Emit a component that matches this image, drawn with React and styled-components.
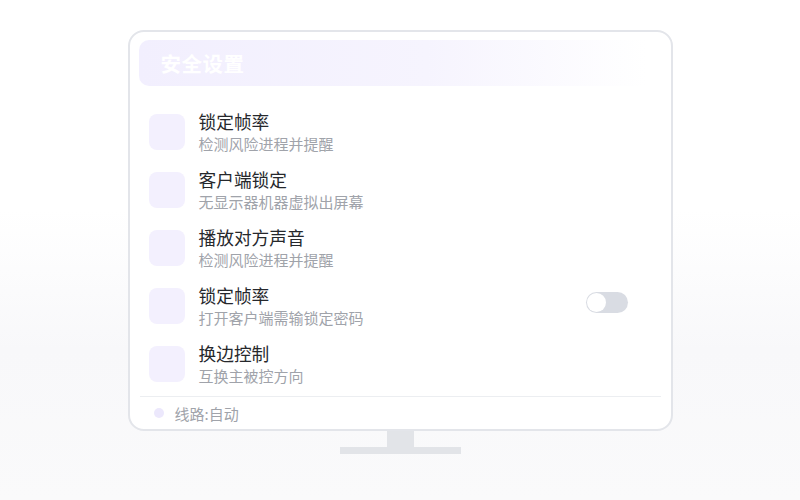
import React from "react";
import styled, { createGlobalStyle } from "styled-components";

const rows = [
  { title: "锁定帧率", desc: "检测风险进程并提醒" },
  { title: "客户端锁定", desc: "无显示器机器虚拟出屏幕" },
  { title: "播放对方声音", desc: "检测风险进程并提醒" },
  { title: "锁定帧率", desc: "打开客户端需输锁定密码", toggle: true },
  { title: "换边控制", desc: "互换主被控方向" },
];

const GlobalStyle = createGlobalStyle`
  html, body {
    margin: 0;
    padding: 0;
  }
  body {
    width: 800px;
    height: 500px;
    overflow: hidden;
    font-family: "Noto Sans CJK SC", "Noto Sans", sans-serif;
    background: linear-gradient(180deg, #ffffff 0%, #ffffff 42%, #f8f8fa 70%, #fafafb 100%);
  }
`;

const Page = styled.div`
  display: flex;
  flex-direction: column;
  align-items: center;
  padding-top: 30px;
`;

const Screen = styled.div`
  box-sizing: border-box;
  width: 545px;
  height: 401px;
  border: 2px solid #e3e5ea;
  border-radius: 16px;
  background: #ffffff;
  padding: 8px 9px 0 9px;
  display: flex;
  flex-direction: column;
`;

const Header = styled.div`
  height: 46px;
  border-radius: 10px;
  background: linear-gradient(90deg, #f2effe 0%, #f6f4fe 55%, rgba(250, 249, 255, 0) 97%);
  display: flex;
  align-items: center;
  padding-left: 22px;
  color: #ffffff;
  font-size: 20.5px;
  font-weight: 700;
  letter-spacing: 0.5px;
`;

const List = styled.div`
  margin-top: 17px;
  display: flex;
  flex-direction: column;
`;

const Row = styled.div`
  height: 58px;
  display: flex;
  align-items: center;
  padding-left: 10px;
  padding-right: 34px;
`;

const Icon = styled.div`
  width: 36px;
  height: 36px;
  border-radius: 8px;
  background: #f3f0fe;
  flex-shrink: 0;
`;

const Text = styled.div`
  margin-left: 14px;
  display: flex;
  flex-direction: column;
  flex: 1;
`;

const Title = styled.div`
  font-size: 17.7px;
  line-height: 23px;
  color: #26282c;
`;

const Desc = styled.div`
  font-size: 15px;
  line-height: 21px;
  color: #a0a3aa;
`;

const Toggle = styled.div`
  width: 42px;
  height: 21px;
  margin-bottom: 7px;
  border-radius: 11px;
  background: #d9dce3;
  display: flex;
  align-items: center;
  padding-left: 1px;
  box-sizing: border-box;
`;

const Knob = styled.div`
  width: 19px;
  height: 19px;
  border-radius: 50%;
  background: #ffffff;
`;

const Divider = styled.div`
  height: 1px;
  background: #eceef1;
  margin: 3px 1px 0 1px;
`;

const Footer = styled.div`
  height: 32px;
  display: flex;
  align-items: center;
  padding-left: 15px;
  gap: 11px;
  font-size: 15px;
  color: #a0a3aa;
`;

const Dot = styled.span`
  width: 10px;
  height: 10px;
  border-radius: 50%;
  background: #ece8fc;
`;

const Neck = styled.div`
  width: 27px;
  height: 16px;
  background: #e2e4e8;
`;

const Base = styled.div`
  width: 121px;
  height: 7px;
  margin-left: 1px;
  background: #e2e4e8;
`;

export default function App() {
  return (
    <>
      <GlobalStyle />
      <Page>
        <Screen>
          <Header>安全设置</Header>
          <List>
            {rows.map((r, i) => (
              <Row key={i}>
                <Icon />
                <Text>
                  <Title>{r.title}</Title>
                  <Desc>{r.desc}</Desc>
                </Text>
                {r.toggle && (
                  <Toggle>
                    <Knob />
                  </Toggle>
                )}
              </Row>
            ))}
          </List>
          <Divider />
          <Footer>
            <Dot />
            线路:自动
          </Footer>
        </Screen>
        <Neck />
        <Base />
      </Page>
    </>
  );
}
